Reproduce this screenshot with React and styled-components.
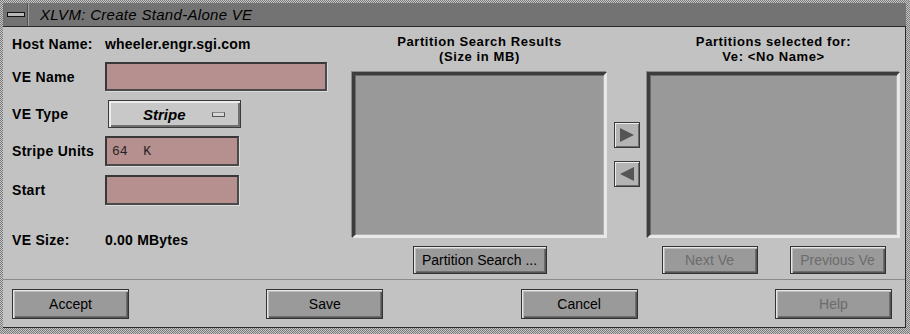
import React from "react";
import styled, { createGlobalStyle } from "styled-components";

const Global = createGlobalStyle`
  html, body { margin: 0; padding: 0; background: #9a9a9a; }
  body { font-family: "Liberation Sans", Arial, sans-serif; }
  * { box-sizing: border-box; }
`;

const Window = styled.div`
  width: 910px;
  height: 334px;
  display: flex;
  flex-direction: column;
  padding: 3px 4px 6px 3px;
  background: repeating-conic-gradient(#c4c4c4 0 25%, #7c7c7c 0 50%) 0 0 / 2px 2px;
`;

const TitleBar = styled.div`
  height: 24px;
  display: flex;
  background: #737373;
  border-bottom: 1px solid #2a2a2a;
`;

const MenuButton = styled.div`
  width: 26px;
  display: flex;
  align-items: center;
  justify-content: center;
  border-right: 1px solid #a0a0a0;
  box-shadow: inset -1px 0 0 #505050;
`;

const MenuGlyph = styled.div`
  width: 18px;
  height: 5px;
  background: #b8b8b8;
  border: 1px solid #111;
`;

const Title = styled.div`
  flex: 1;
  display: flex;
  align-items: center;
  padding-left: 11px;
  font-style: italic;
  font-size: 15px;
  letter-spacing: 0.3px;
  color: #000;
`;

const Content = styled.div`
  flex: 1;
  display: flex;
  flex-direction: column;
  background: #c2c2c2;
  border-right: 1px solid #2a2a2a;
  border-bottom: 1px solid #2a2a2a;
`;

const Body = styled.div`
  height: 252px;
  display: flex;
  padding: 0 5px 0 9px;
`;

const LeftCol = styled.div`
  width: 340px;
  display: flex;
  flex-direction: column;
`;

const Row = styled.div`
  display: flex;
  align-items: center;
  height: ${(p) => p.$h}px;
  margin-top: ${(p) => p.$mt}px;
`;

const Label = styled.div`
  width: 93px;
  font-weight: bold;
  font-size: 14px;
  letter-spacing: 0.3px;
  color: #000;
  white-space: nowrap;
`;

const Value = styled.div`
  font-weight: bold;
  font-size: 14px;
  letter-spacing: 0.2px;
  color: #000;
`;

const TextField = styled.div`
  width: ${(p) => p.$w}px;
  height: 100%;
  background: #b68f8f;
  border: 2px solid #4a4a4a;
  border-top-color: #383838;
  border-left-color: #383838;
  box-shadow: 1px 1px 0 #dcdcdc;
  display: flex;
  align-items: center;
  padding-left: 5px;
  font-family: "Liberation Mono", "DejaVu Sans Mono", monospace;
  font-size: 13px;
  color: #222;
  white-space: pre;
`;

const OptionMenu = styled.div`
  margin-left: 3px;
  width: 133px;
  height: 100%;
  position: relative;
  background: #c8c8c8;
  border: 1px solid #3a3a3a;
  box-shadow: inset 2px 2px 0 #ececec, inset -2px -2px 0 #707070;
  display: flex;
  align-items: center;
  padding-left: 34px;
  font-weight: bold;
  font-style: italic;
  font-size: 15px;
  color: #000;
`;

const OptionIndicator = styled.div`
  position: absolute;
  right: 15px;
  top: 11px;
  width: 13px;
  height: 5px;
  background: #d8d8d8;
  border: 1px solid #555;
  border-top-color: #888;
`;

const ListCol = styled.div`
  width: ${(p) => p.$w}px;
  display: flex;
  flex-direction: column;
  align-items: center;
`;

const Header = styled.div`
  margin-top: 7px;
  height: 30px;
  font-weight: bold;
  font-size: 13px;
  letter-spacing: 0.6px;
  line-height: 15px;
  text-align: center;
  color: #000;
`;

const ListBox = styled.div`
  margin-top: 8px;
  width: 100%;
  height: 166px;
  background: #999999;
  border: 3px solid;
  border-color: #3c3c3c #e8e8e8 #e8e8e8 #3c3c3c;
  box-shadow: inset 1px 1px 0 #6a6a6a, inset -1px -1px 0 #b0b0b0, -1px -1px 0 #8a8a8a;
`;

const ButtonRow = styled.div`
  margin-top: 8px;
  display: flex;
  gap: ${(p) => p.$gap || 0}px;
  justify-content: center;
`;

const Button = styled.div`
  width: ${(p) => p.$w}px;
  height: ${(p) => p.$h}px;
  background: #9a9a9a;
  border: 1px solid #333;
  box-shadow: inset 1px 1px 0 #e6e6e6, inset 2px 2px 0 #bdbdbd, inset -1px -1px 0 #555, inset -2px -2px 0 #6e6e6e;
  display: flex;
  align-items: center;
  justify-content: center;
  font-size: 14px;
  color: ${(p) => (p.$disabled ? "#6c6c6c" : "#000")};
  white-space: nowrap;
`;

const ArrowCol = styled.div`
  width: 40px;
  display: flex;
  flex-direction: column;
  align-items: center;
  padding-top: 95px;
  gap: 13px;
`;

const ArrowButton = styled.div`
  width: 26px;
  height: 26px;
  background: #b4b4b4;
  border: 1px solid #3a3a3a;
  box-shadow: inset 1px 1px 0 #ececec, inset -1px -1px 0 #6a6a6a;
  display: flex;
  align-items: center;
  justify-content: center;
`;

const Separator = styled.div`
  height: 1px;
  background: #8a8a8a;
`;

const BottomBar = styled.div`
  flex: 1;
  display: flex;
  justify-content: space-between;
  align-items: flex-start;
  padding: 9px 13px 0 9px;
`;

const Arrow = ({ dir }) => (
  <svg width="16" height="16" viewBox="0 0 16 16">
    {dir === "right" ? (
      <polygon points="1,1 15,8 1,15" fill="#555" />
    ) : (
      <polygon points="15,1 1,8 15,15" fill="#555" />
    )}
  </svg>
);

export default function App() {
  return (
    <>
      <Global />
      <Window>
        <TitleBar>
          <MenuButton>
            <MenuGlyph />
          </MenuButton>
          <Title>XLVM: Create Stand-Alone VE</Title>
        </TitleBar>
        <Content>
          <Body>
            <LeftCol>
              <Row $h={16} $mt={9}>
                <Label>Host Name:</Label>
                <Value>wheeler.engr.sgi.com</Value>
              </Row>
              <Row $h={29} $mt={10}>
                <Label>VE Name</Label>
                <TextField $w={222} />
              </Row>
              <Row $h={28} $mt={9}>
                <Label>VE Type</Label>
                <OptionMenu>
                  Stripe
                  <OptionIndicator />
                </OptionMenu>
              </Row>
              <Row $h={30} $mt={8}>
                <Label>Stripe Units</Label>
                <TextField $w={134}>64  K</TextField>
              </Row>
              <Row $h={30} $mt={9}>
                <Label>Start</Label>
                <TextField $w={134} />
              </Row>
              <Row $h={16} $mt={27}>
                <Label>VE Size:</Label>
                <Value>0.00 MBytes</Value>
              </Row>
            </LeftCol>
            <ListCol $w={255}>
              <Header>
                Partition Search Results
                <br />
                (Size in MB)
              </Header>
              <ListBox />
              <ButtonRow>
                <Button $w={134} $h={28}>Partition Search ...</Button>
              </ButtonRow>
            </ListCol>
            <ArrowCol>
              <ArrowButton>
                <Arrow dir="right" />
              </ArrowButton>
              <ArrowButton>
                <Arrow dir="left" />
              </ArrowButton>
            </ArrowCol>
            <ListCol $w={253}>
              <Header>
                Partitions selected for:
                <br />
                Ve: &lt;No Name&gt;
              </Header>
              <ListBox />
              <ButtonRow $gap={32}>
                <Button $w={96} $h={28} $disabled>Next Ve</Button>
                <Button $w={96} $h={28} $disabled>Previous Ve</Button>
              </ButtonRow>
            </ListCol>
          </Body>
          <Separator />
          <BottomBar>
            <Button $w={117} $h={30}>Accept</Button>
            <Button $w={117} $h={30}>Save</Button>
            <Button $w={117} $h={30}>Cancel</Button>
            <Button $w={117} $h={30} $disabled>Help</Button>
          </BottomBar>
        </Content>
      </Window>
    </>
  );
}
